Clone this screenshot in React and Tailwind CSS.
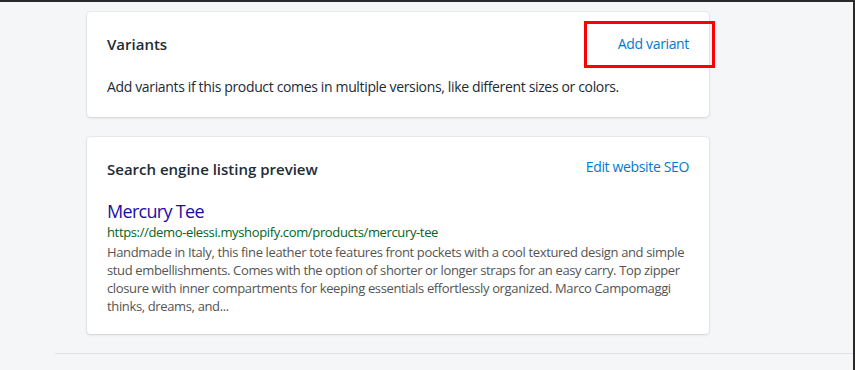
export default function App() {
  const font = { fontFamily: '"Open Sans", "Noto Sans", sans-serif' };
  return (
    <div
      className="relative w-[855px] h-[370px] bg-[#f4f6f8] border-t-2 border-r-2 border-[#2a2a2a] overflow-hidden text-[#212b36]"
      style={font}
    >
      <div className="ml-[87px] w-[622px] pt-[10px] flex flex-col gap-[20px]">
        <div className="bg-white rounded-[4px] shadow-[0_0_0_1px_rgba(63,63,68,0.05),0_1px_3px_0_rgba(63,63,68,0.15)] px-[20px] pt-[19px] pb-[20px]">
          <div className="flex items-center justify-between h-[26px]">
            <h2 className="text-[15px] font-semibold leading-[24px]">Variants</h2>
            <button className="text-[14px] tracking-[-0.35px] text-[#007ace] leading-[20px]">Add variant</button>
          </div>
          <p className="mt-[20px] text-[14px] tracking-[-0.35px] leading-[20px]">
            Add variants if this product comes in multiple versions, like different sizes or colors.
          </p>
        </div>
        <div className="bg-white rounded-[4px] shadow-[0_0_0_1px_rgba(63,63,68,0.05),0_1px_3px_0_rgba(63,63,68,0.15)] px-[20px] pt-[20px] pb-[19px]">
          <div className="flex items-start justify-between">
            <h2 className="text-[15px] font-semibold leading-[24px]">Search engine listing preview</h2>
            <button className="text-[14px] tracking-[-0.35px] text-[#007ace] leading-[20px]">Edit website SEO</button>
          </div>
          <div className="mt-[19px]">
            <div className="text-[18px] tracking-[-0.7px] leading-[22px] text-[#1a0dab]">Mercury Tee</div>
            <div className="text-[13px] tracking-[-0.36px] leading-[18px] text-[#006621] mt-[1px]">
              https://demo-elessi.myshopify.com/products/mercury-tee
            </div>
            <p className="text-[13px] tracking-[-0.36px] leading-[18px] text-[#545454] mt-[2px] pr-[2px]">
              Handmade in Italy, this fine leather tote features front pockets with a cool textured design and simple stud embellishments. Comes with the option of shorter or longer straps for an easy carry. Top zipper closure with inner compartments for keeping essentials effortlessly organized. Marco Campomaggi thinks, dreams, and...
            </p>
          </div>
        </div>
      </div>
      <div className="ml-[55px] mt-[19px] border-t border-[#dfe3e8]" />
      <div className="absolute left-[584px] top-[19px] w-[131px] h-[47px] border-[3px] border-[#ff0000] pointer-events-none" />
    </div>
  );
}
